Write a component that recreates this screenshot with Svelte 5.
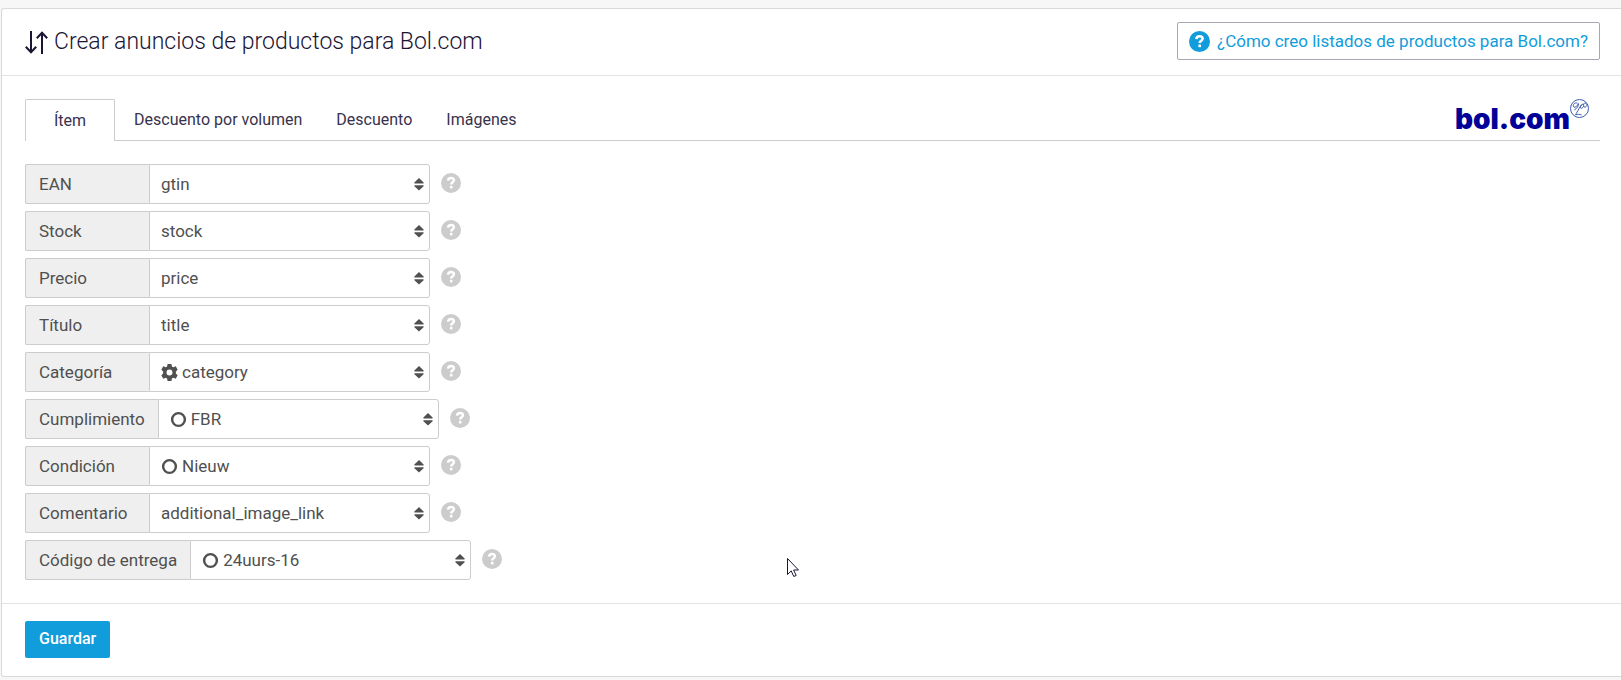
<script>
  const tabs = ['Ítem', 'Descuento por volumen', 'Descuento', 'Imágenes'];
  let activeTab = 'Ítem';

  let fields = [
    { id: 'ean', label: 'EAN', value: 'gtin', icon: '' },
    { id: 'stock', label: 'Stock', value: 'stock', icon: '' },
    { id: 'price', label: 'Precio', value: 'price', icon: '' },
    { id: 'title', label: 'Título', value: 'title', icon: '' },
    { id: 'category', label: 'Categoría', value: 'category', icon: 'gear' },
    { id: 'fulfilment', label: 'Cumplimiento', value: 'FBR', icon: 'ring' },
    { id: 'condition', label: 'Condición', value: 'Nieuw', icon: 'ring' },
    { id: 'comment', label: 'Comentario', value: 'additional_image_link', icon: '' },
    { id: 'delivery', label: 'Código de entrega', value: '24uurs-16', icon: 'ring' }
  ];
</script>

{#snippet question()}
  <svg class="question" viewBox="0 0 20 20" aria-hidden="true">
    <circle cx="10" cy="10" r="10" fill="currentColor" />
    <path d="M7 7.700C7.200 5.700 8.400 5 10 5c1.800 0 2.900.9 2.900 2.300 0 2-2.700 2-2.700 4.200" fill="none" stroke="#fff" stroke-width="2.500" />
    <rect x="8.900" y="12.800" width="2.600" height="2.600" rx="0.6" fill="#fff" />
  </svg>
{/snippet}

<main class="panel">
  <header class="panel-header">
    <h1>
      <svg class="arrows" viewBox="0 0 23 23" aria-hidden="true">
        <path d="M6 0v21M0.8 15.8L6 21.2l5.2-5.4M17 23V2M11.8 7.2L17 1.8l5.2 5.4" />
      </svg>
      Crear anuncios de productos para Bol.com
    </h1>
    <a class="help-link" href="#help">
      {@render question()}
      ¿Cómo creo listados de productos para Bol.com?
    </a>
  </header>

  <section class="panel-body">
    <div class="tab-bar">
      <nav class="tabs">
        {#each tabs as tab}
          <button class="tab" class:active={tab === activeTab} on:click={() => (activeTab = tab)}>{tab}</button>
        {/each}
      </nav>
      <div class="logo">
        <span>bol.com</span>
        <svg viewBox="0 0 19 19" aria-hidden="true">
          <circle cx="9.5" cy="9.5" r="9" />
          <path d="M7.6 4.2C5 3 2.6 5.600 3.400 7.600c1 1.800 4-.2 5-3 .6 2-1.600 5-4 6.400M9 9.500c1.200-1.600 2-3.400 3.600-4.400-2.400 1-3 4-1.400 4.200 1.800 0 3.400-3.200 2.200-4.300 1.200-1.600 4-.6 3.400 1.400-.6 1.800-3 2.400-3.200.8M9 9.500c-1 2.400-3 5-3.400 6.300 2-.8 4-.5 6 .2" />
        </svg>
      </div>
    </div>

    <form class="fields" id="listing">
      {#each fields as field}
        <div class="field">
          <label for={field.id}>{field.label}</label>
          <div class="control">
            <select id={field.id} class:with-icon={field.icon} bind:value={field.value}>
              <option value={field.value}>{field.value}</option>
            </select>
            {#if field.icon === 'gear'}
              <svg class="lead" viewBox="0 0 16 16" aria-hidden="true">
                <path fill="currentColor" fill-rule="evenodd" d="M6.200 0h3.600l.5 2.300 1.300.7 2.300-.8 1.800 3.200L14 7v2l1.700 1.600-1.800 3.200-2.300-.8-1.300.7-.5 2.300H6.200l-.5-2.300-1.300-.7-2.300.8-1.800-3.200L2 9V7L.3 5.400l1.800-3.200 2.300.8 1.300-.7zM8 5.200a2.800 2.800 0 1 0 0 5.600 2.800 2.800 0 0 0 0-5.600z" />
              </svg>
            {:else if field.icon === 'ring'}
              <svg class="lead" viewBox="0 0 16 16" aria-hidden="true">
                <circle cx="8" cy="8" r="6" fill="none" stroke="currentColor" stroke-width="2.300" />
              </svg>
            {/if}
            <svg class="sort" viewBox="0 0 10 13" aria-hidden="true">
              <path fill="currentColor" d="M5 0l4.600 4.600q.6.900-.5.900H.9q-1.100 0-.5-.9zM5 12.500L.4 8.200q-.6-.900.5-.900h8.200q1.100 0 .5.900z" />
            </svg>
          </div>
          <a class="hint" href="#hint-{field.id}" aria-label="Ayuda: {field.label}">{@render question()}</a>
        </div>
      {/each}
    </form>
  </section>

  <footer class="panel-footer">
    <button class="save" type="submit" form="listing">Guardar</button>
  </footer>
</main>

<svg class="cursor" viewBox="0 0 12 19" aria-hidden="true">
  <path d="M.5.5v16l3.700-3.600 2.600 5.600 2.400-1.100-2.600-5.400h4.900z" />
</svg>

<style>
  :global(body) {
    background: #f7f7f7;
    overflow-x: hidden;
  }

  .panel {
    margin: 8px 0 3px 1px;
    border: 1px solid #d9d9d9;
    border-right: 0;
    border-radius: 3px 0 0 3px;
    background: #fff;
    color: #1b1534;
    font-family: Roboto, sans-serif;
    font-size: 17px;
  }

  .panel-header {
    display: flex;
    align-items: flex-start;
    justify-content: space-between;
    padding: 13px 21px 13px 23px;
    border-bottom: 1px solid #e2e2e2;
  }

  h1 {
    display: flex;
    align-items: center;
    gap: 6px;
    margin: 0;
    font-size: 23px;
    font-weight: 350;
    line-height: 40px;
  }

  .arrows {
    width: 23px;
    height: 23px;
    fill: none;
    stroke: currentColor;
    stroke-width: 2;
  }

  .help-link {
    display: flex;
    align-items: center;
    gap: 7px;
    height: 36px;
    padding: 0 11px;
    border: 1px solid #a9a7b5;
    border-radius: 2px;
    color: #119cdb;
    text-decoration: none;
  }

  .question {
    display: block;
    flex: none;
    width: 20px;
    height: 20px;
  }

  .help-link .question {
    width: 21px;
    height: 21px;
  }

  .panel-body {
    padding: 23px 21px 23px 23px;
  }

  .tab-bar {
    display: flex;
    justify-content: space-between;
    height: 41px;
    border-bottom: 1px solid #ccc;
  }

  .tabs {
    display: flex;
  }

  .tab {
    height: 41px;
    padding: 0 17px;
    border: 0;
    background: none;
    color: #38324c;
    font: inherit;
    font-size: 16px;
  }

  .tab.active {
    height: 42px;
    margin-right: 2px;
    padding: 0 28px;
    border: 1px solid #ccc;
    border-bottom: 0;
    border-radius: 2px 2px 0 0;
    background: #fff;
  }

  .logo {
    display: flex;
    align-items: flex-start;
    padding-right: 11px;
    color: #000099;
    font-family: Inter, sans-serif;
    font-size: 28px;
    font-weight: 900;
    line-height: 40px;
  }

  .logo svg {
    width: 19px;
    height: 19px;
    fill: none;
    stroke: #3d5fae;
    stroke-width: 1;
  }

  .fields {
    display: flex;
    flex-direction: column;
    gap: 7px;
    margin-top: 23px;
    color: #505050;
  }

  .field {
    display: flex;
    align-items: center;
    height: 40px;
  }

  label {
    box-sizing: border-box;
    min-width: 124px;
    padding: 0 13px;
    border: 1px solid #ccc;
    border-right: 0;
    border-radius: 2px 0 0 2px;
    background: #efefef;
    line-height: 38px;
  }

  .control {
    display: grid;
    align-items: center;
    width: 281px;
  }

  .control > * {
    grid-area: 1 / 1;
  }

  select {
    appearance: none;
    width: 100%;
    height: 40px;
    padding: 0 30px 0 11px;
    border: 1px solid #ccc;
    border-radius: 0 3px 3px 0;
    background: #fff;
    color: inherit;
    font: inherit;
  }

  select.with-icon {
    padding-left: 32px;
  }

  .lead {
    width: 17px;
    height: 17px;
    margin-left: 12px;
    pointer-events: none;
  }

  .sort {
    justify-self: end;
    width: 10px;
    height: 13px;
    margin-right: 6px;
    pointer-events: none;
  }

  .hint {
    margin: 0 0 3px 11px;
    color: #ccc;
  }

  .panel-footer {
    padding: 17px 23px 18px;
    border-top: 1px solid #e2e2e2;
  }

  .save {
    display: block;
    height: 37px;
    padding: 0 14px 2px;
    border: 0;
    border-radius: 2px;
    background: #119cdb;
    color: #fff;
    font: inherit;
    font-size: 16px;
    font-weight: 500;
  }

  .cursor {
    position: absolute;
    left: 787px;
    top: 558px;
    width: 12px;
    height: 19px;
    fill: #fff;
    stroke: #1b1534;
    stroke-width: 1;
    pointer-events: none;
  }
</style>
